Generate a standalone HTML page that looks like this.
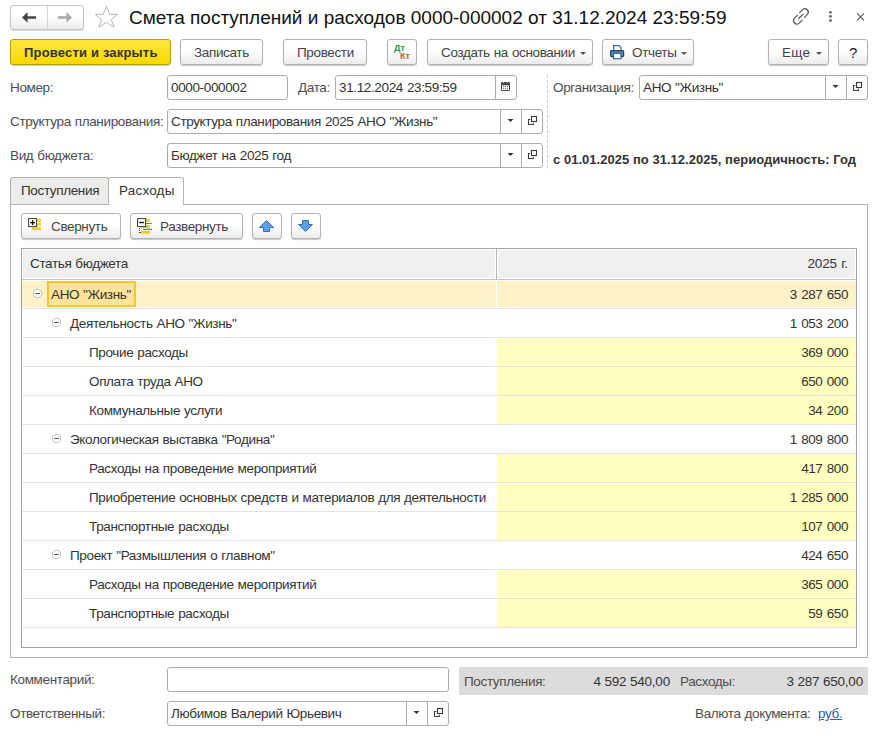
<!DOCTYPE html>
<html><head><meta charset="utf-8">
<style>
*{box-sizing:border-box;margin:0;padding:0}
html,body{width:877px;height:734px;overflow:hidden;background:#fff}
body{position:relative;font-family:"Liberation Sans",sans-serif;font-size:13px;color:#333}
.a{position:absolute}
.t{position:absolute;white-space:nowrap;line-height:15px;font-size:13.5px;letter-spacing:-0.36px;word-spacing:0.54px}
.lbl{color:#4d4d4d}
.btn{position:absolute;height:26px;border:1px solid #b3b3b3;border-radius:3px;background:linear-gradient(#fff 0%,#fff 45%,#ebebeb 100%);box-shadow:0 1px 1px rgba(0,0,0,.22)}
.fld{position:absolute;border:1px solid #ababab;border-radius:3px;background:#fff}
.sep{position:absolute;top:0;bottom:0;width:1px;background:#ababab}
.row{position:absolute;left:22px;width:834px;height:28px}
.rl{position:absolute;left:22px;width:834px;height:1px;background:#e4e4e4}
.yc{position:absolute;left:497px;width:359px;height:28px;background:#ffffc2}
.num{position:absolute;right:29px;white-space:nowrap;line-height:15px;font-size:13.5px;letter-spacing:-0.42px;word-spacing:1px;text-align:right}
</style></head><body>

<!-- top nav -->
<div class="a" style="left:10px;top:5px;width:74px;height:25px;border:1px solid #c4c4c4;border-radius:3px;background:linear-gradient(#fff 40%,#ececec);box-shadow:0 1px 1px rgba(0,0,0,.15)"></div>
<div class="a" style="left:47px;top:6px;width:1px;height:23px;background:#d4d4d4"></div>

<div class="t" style="left:129px;top:7px;font-size:19px;line-height:22px;color:#111;letter-spacing:0;word-spacing:0">Смета поступлений и расходов 0000-000002 от 31.12.2024 23:59:59</div>

<!-- toolbar -->
<div class="a" style="left:10px;top:39px;width:161px;height:26px;border:1px solid #b89e00;border-radius:3px;background:linear-gradient(#ffe840,#f8d800);box-shadow:0 1px 1px rgba(0,0,0,.2)"></div>
<div class="t" style="left:24px;top:45px;font-weight:bold;font-size:13px;letter-spacing:0.18px;word-spacing:0;color:#333">Провести и закрыть</div>

<div class="btn" style="left:180px;top:39px;width:83px"></div>
<div class="t" style="left:194px;top:45px;color:#444">Записать</div>
<div class="btn" style="left:283px;top:39px;width:84px"></div>
<div class="t" style="left:297px;top:45px;color:#444">Провести</div>
<div class="btn" style="left:387px;top:39px;width:30px"></div>
<div class="btn" style="left:427px;top:39px;width:166px"></div>
<div class="t" style="left:441px;top:45px;color:#444">Создать на основании</div>
<div class="btn" style="left:602px;top:39px;width:92px"></div>
<div class="t" style="left:632px;top:45px;color:#444">Отчеты</div>
<div class="btn" style="left:768px;top:39px;width:61px"></div>
<div class="t" style="left:782px;top:45px;color:#444;letter-spacing:0.3px">Еще</div>
<div class="btn" style="left:838px;top:39px;width:30px"></div>

<!-- fields -->
<div class="t lbl" style="left:10px;top:80px">Номер:</div>
<div class="fld" style="left:167px;top:75px;width:121px;height:25px"></div>
<div class="t" style="left:171px;top:80px">0000-000002</div>
<div class="t lbl" style="left:298px;top:80px">Дата:</div>
<div class="fld" style="left:335px;top:75px;width:182px;height:25px"><div class="sep" style="left:159px"></div></div>
<div class="t" style="left:339px;top:80px">31.12.2024 23:59:59</div>

<div class="a" style="left:547px;top:75px;width:1px;height:93px;background:repeating-linear-gradient(#cdcdcd 0 3px,transparent 3px 5px)"></div>
<div class="t lbl" style="left:553px;top:80px">Организация:</div>
<div class="fld" style="left:639px;top:75px;width:229px;height:25px"><div class="sep" style="left:185px"></div><div class="sep" style="left:206px"></div></div>
<div class="t" style="left:643px;top:80px">АНО "Жизнь"</div>

<div class="t lbl" style="left:10px;top:114px">Структура планирования:</div>
<div class="fld" style="left:167px;top:109px;width:376px;height:25px"><div class="sep" style="left:332px"></div><div class="sep" style="left:353px"></div></div>
<div class="t" style="left:171px;top:114px">Структура планирования 2025 АНО "Жизнь"</div>

<div class="t lbl" style="left:10px;top:148px">Вид бюджета:</div>
<div class="fld" style="left:167px;top:143px;width:376px;height:25px"><div class="sep" style="left:332px"></div><div class="sep" style="left:353px"></div></div>
<div class="t" style="left:171px;top:148px">Бюджет на 2025 год</div>
<div class="t" style="left:553px;top:152px;font-weight:bold;font-size:13px;letter-spacing:0.03px;word-spacing:0">с 01.01.2025 по 31.12.2025, периодичность: Год</div>

<!-- tabs -->
<div class="a" style="left:10px;top:204px;width:858px;height:454px;border:1px solid #b2b2b2"></div>
<div class="a" style="left:10px;top:177px;width:99px;height:27px;border:1px solid #b2b2b2;border-bottom:none;border-radius:3px 3px 0 0;background:#ececec"></div>
<div class="a" style="left:108px;top:177px;width:76px;height:28px;border:1px solid #b2b2b2;border-bottom:none;border-radius:3px 3px 0 0;background:#fff"></div>
<div class="t" style="left:21px;top:183px">Поступления</div>
<div class="t" style="left:119px;top:183px;letter-spacing:0.2px">Расходы</div>

<div class="btn" style="left:21px;top:213px;width:100px"></div>
<div class="t" style="left:51px;top:219px;color:#444">Свернуть</div>
<div class="btn" style="left:130px;top:213px;width:113px"></div>
<div class="t" style="left:160px;top:219px;color:#444">Развернуть</div>
<div class="btn" style="left:252px;top:213px;width:30px"></div>
<div class="btn" style="left:291px;top:213px;width:30px"></div>

<!-- table -->
<div class="a" style="left:21px;top:248px;width:836px;height:400px;border:1px solid #a3a3a3"></div>
<div class="a" style="left:23px;top:250px;width:472px;height:28px;background:#f0f0f0"></div>
<div class="a" style="left:498px;top:250px;width:357px;height:28px;background:#f0f0f0"></div>
<div class="a" style="left:496px;top:249px;width:1px;height:31px;background:#b4b4b4"></div>
<div class="a" style="left:22px;top:279px;width:834px;height:1px;background:#c4c4c4"></div>
<div class="t" style="left:30px;top:256px">Статья бюджета</div>
<div class="num" style="top:256px;letter-spacing:-0.1px;word-spacing:0.5px">2025 г.</div>

<!--ROWS-->
<div class="a" style="left:22px;top:281px;width:834px;height:26px;background:#fdf1c7"></div>
<div class="a" style="left:496px;top:281px;width:1px;height:26px;background:#fff"></div>
<div class="a" style="left:47px;top:281px;width:89px;height:26px;border:2px solid #f8c820;background:#fde49a"></div>
<div class="rl" style="top:308px"></div>
<svg class="a" style="left:32px;top:288px" width="11" height="11" viewBox="0 0 11 11"><circle cx="5.5" cy="5.5" r="4.1" fill="#fff" stroke="#b4b4b4" stroke-width="0.9"/><path d="M3.3 5.5h4.4" stroke="#555" stroke-width="1.1"/></svg>
<div class="t" style="left:51px;top:287px">АНО "Жизнь"</div>
<div class="num" style="top:287px">3 287 650</div>
<div class="rl" style="top:337px"></div>
<svg class="a" style="left:51px;top:317px" width="11" height="11" viewBox="0 0 11 11"><circle cx="5.5" cy="5.5" r="4.1" fill="#fff" stroke="#b4b4b4" stroke-width="0.9"/><path d="M3.3 5.5h4.4" stroke="#555" stroke-width="1.1"/></svg>
<div class="t" style="left:70px;top:316px">Деятельность АНО "Жизнь"</div>
<div class="num" style="top:316px">1 053 200</div>
<div class="yc" style="top:338px"></div>
<div class="rl" style="top:366px"></div>
<div class="t" style="left:89px;top:345px">Прочие расходы</div>
<div class="num" style="top:345px">369 000</div>
<div class="yc" style="top:367px"></div>
<div class="rl" style="top:395px"></div>
<div class="t" style="left:89px;top:374px">Оплата труда АНО</div>
<div class="num" style="top:374px">650 000</div>
<div class="yc" style="top:396px"></div>
<div class="rl" style="top:424px"></div>
<div class="t" style="left:89px;top:403px">Коммунальные услуги</div>
<div class="num" style="top:403px">34 200</div>
<div class="rl" style="top:453px"></div>
<svg class="a" style="left:51px;top:433px" width="11" height="11" viewBox="0 0 11 11"><circle cx="5.5" cy="5.5" r="4.1" fill="#fff" stroke="#b4b4b4" stroke-width="0.9"/><path d="M3.3 5.5h4.4" stroke="#555" stroke-width="1.1"/></svg>
<div class="t" style="left:70px;top:432px">Экологическая выставка "Родина"</div>
<div class="num" style="top:432px">1 809 800</div>
<div class="yc" style="top:454px"></div>
<div class="rl" style="top:482px"></div>
<div class="t" style="left:89px;top:461px">Расходы на проведение мероприятий</div>
<div class="num" style="top:461px">417 800</div>
<div class="yc" style="top:483px"></div>
<div class="rl" style="top:511px"></div>
<div class="t" style="left:89px;top:490px">Приобретение основных средств и материалов для деятельности</div>
<div class="num" style="top:490px">1 285 000</div>
<div class="yc" style="top:512px"></div>
<div class="rl" style="top:540px"></div>
<div class="t" style="left:89px;top:519px">Транспортные расходы</div>
<div class="num" style="top:519px">107 000</div>
<div class="rl" style="top:569px"></div>
<svg class="a" style="left:51px;top:549px" width="11" height="11" viewBox="0 0 11 11"><circle cx="5.5" cy="5.5" r="4.1" fill="#fff" stroke="#b4b4b4" stroke-width="0.9"/><path d="M3.3 5.5h4.4" stroke="#555" stroke-width="1.1"/></svg>
<div class="t" style="left:70px;top:548px">Проект "Размышления о главном"</div>
<div class="num" style="top:548px">424 650</div>
<div class="yc" style="top:570px"></div>
<div class="rl" style="top:598px"></div>
<div class="t" style="left:89px;top:577px">Расходы на проведение мероприятий</div>
<div class="num" style="top:577px">365 000</div>
<div class="yc" style="top:599px"></div>
<div class="rl" style="top:627px"></div>
<div class="t" style="left:89px;top:606px">Транспортные расходы</div>
<div class="num" style="top:606px">59 650</div>
<!--/ROWS-->

<!-- bottom -->
<div class="t lbl" style="left:10px;top:672px">Комментарий:</div>
<div class="fld" style="left:167px;top:667px;width:282px;height:25px"></div>
<div class="t lbl" style="left:10px;top:706px">Ответственный:</div>
<div class="fld" style="left:167px;top:701px;width:282px;height:25px"><div class="sep" style="left:238px"></div><div class="sep" style="left:259px"></div></div>
<div class="t" style="left:171px;top:706px">Любимов Валерий Юрьевич</div>
<div class="a" style="left:459px;top:667px;width:409px;height:28px;background:#dcdcdc"></div>
<div class="t lbl" style="left:464px;top:674px">Поступления:</div>
<div class="t" style="left:560px;top:674px;width:110px;text-align:right;letter-spacing:-0.2px;word-spacing:0">4 592 540,00</div>
<div class="t lbl" style="left:680px;top:674px">Расходы:</div>
<div class="t" style="left:753px;top:674px;width:110px;text-align:right;letter-spacing:-0.2px;word-spacing:0">3 287 650,00</div>
<div class="t lbl" style="left:695px;top:706px">Валюта документа:</div>
<div class="t" style="left:818px;top:706px;color:#2d5fa6;text-decoration:underline">руб.</div>
<div class="a" style="left:394px;top:43px;font-size:9px;line-height:10px;font-weight:bold;color:#16a040">Дт</div>
<div class="a" style="left:400px;top:51px;font-size:9px;line-height:10px;font-weight:bold;color:#b8641e">Кт</div>
<div class="t" style="left:849px;top:45px;font-size:15px;letter-spacing:0;color:#222">?</div>
<svg class="a" style="left:0;top:0" width="877" height="734" viewBox="0 0 877 734">
<path d="M22 17.4L27.6 12V16.2H36V18.7H27.6V22.8Z" fill="#474747"/>
<path d="M72 17.4L66.4 12V16.2H58V18.7H66.4V22.8Z" fill="#a9a9a9"/>
<path d="M106.4 6.4L109.7 14.4H117.6L111.3 19.6L114.2 27.2L106.4 22.4L98.6 27.2L101.5 19.6L95.2 14.4H103.1Z" fill="none" stroke="#b8b8b8" stroke-width="1"/>
<g fill="none" stroke="#555" stroke-width="1.2" stroke-linecap="round"><path d="M799.6 12.6L802.6 9.6A3.4 3.4 0 0 1 807.4 14.4L804.5 17.3"/><path d="M802.2 20.1L799.2 23.1A3.4 3.4 0 0 1 794.4 18.3L797.3 15.4"/><path d="M798.7 18.5L803.1 14.1"/></g>
<g fill="#6a6a6a"><circle cx="830.5" cy="12.3" r="1.4"/><circle cx="830.5" cy="16.4" r="1.4"/><circle cx="830.5" cy="20.5" r="1.4"/></g>
<path d="M857 13.3L864 20.3M864 13.3L857 20.3" stroke="#5a5a5a" stroke-width="1.1"/>
<path d="M580 52h6l-3 3z" fill="#555"/><path d="M681 52h6l-3 3z" fill="#555"/><path d="M816 52h6l-3 3z" fill="#555"/>
<g stroke-width="1.2"><path d="M613.6 50.5V45.6H619L621 47.6V50.5" fill="#fff" stroke="#3a6d9a"/><rect x="610.6" y="50.6" width="13" height="6" rx="1" fill="#4f8db8" stroke="#2f3f50"/><rect x="613.6" y="53.3" width="7.4" height="5.4" fill="#fff" stroke="#2f5f90"/></g>
<rect x="501" y="82" width="9" height="9" rx="1" fill="#474747"/><rect x="502" y="85.3" width="7" height="4.7" fill="#fff"/><g fill="#555"><circle cx="503.6" cy="86.6" r=".6"/><circle cx="505.5" cy="86.6" r=".6"/><circle cx="507.4" cy="86.6" r=".6"/><circle cx="503.6" cy="88.6" r=".6"/><circle cx="505.5" cy="88.6" r=".6"/><circle cx="507.4" cy="88.6" r=".6"/></g><rect x="503" y="81" width="1" height="1.6" fill="#fff"/><rect x="507" y="81" width="1" height="1.6" fill="#fff"/>
<path d="M832.5 85h6l-3 3z" fill="#333"/><rect x="856.5" y="82.5" width="5" height="5" fill="none" stroke="#3a3a3a" stroke-width="1.1"/><path d="M855.2 85.5H853.5V90.5H858.3V88.8" fill="none" stroke="#3a3a3a" stroke-width="1.1"/>
<path d="M507.5 119h6l-3 3z" fill="#333"/><rect x="531.5" y="116.5" width="5" height="5" fill="none" stroke="#3a3a3a" stroke-width="1.1"/><path d="M530.2 119.5H528.5V124.5H533.3V122.8" fill="none" stroke="#3a3a3a" stroke-width="1.1"/>
<path d="M507.5 153h6l-3 3z" fill="#333"/><rect x="531.5" y="150.5" width="5" height="5" fill="none" stroke="#3a3a3a" stroke-width="1.1"/><path d="M530.2 153.5H528.5V158.5H533.3V156.8" fill="none" stroke="#3a3a3a" stroke-width="1.1"/>
<path d="M413.5 711h6l-3 3z" fill="#333"/><rect x="437.5" y="708.5" width="5" height="5" fill="none" stroke="#3a3a3a" stroke-width="1.1"/><path d="M436.2 711.5H434.5V716.5H439.3V714.8" fill="none" stroke="#3a3a3a" stroke-width="1.1"/>
<rect x="28.6" y="218.6" width="8" height="8" fill="#fff" stroke="#3a3a3a" stroke-width="1"/><path d="M30.2 222.6H35M32.6 220.2V225" stroke="#111" stroke-width="1.4"/><g fill="#f0d000"><rect x="37.2" y="219" width="3.8" height="2.9"/><rect x="37.2" y="223.1" width="3.8" height="2.7"/><rect x="32" y="227.2" width="9" height="2.7"/></g>
<g fill="#f0d000"><rect x="145.8" y="219" width="4" height="2.9"/><rect x="141.2" y="225" width="8.6" height="2.9"/><rect x="141.2" y="230.9" width="8.6" height="2.9"/></g><path d="M145.8 223.5H152M143 229.4H152" stroke="#3d8ad6" stroke-width="1.1"/><rect x="137.6" y="218.6" width="8" height="8" fill="#fff" stroke="#3a3a3a" stroke-width="1"/><path d="M139.3 222.5H144" stroke="#111" stroke-width="1.4"/><g fill="#444"><rect x="139" y="228" width="1" height="1"/><rect x="139" y="230" width="1" height="1"/><rect x="139" y="232" width="2" height="1"/></g>
<path d="M266.5 220.5L273.5 227.5H269.5V231.5H263.5V227.5H259.5Z" fill="#5aa2e8" stroke="#3c6cb4" stroke-width="1" stroke-linejoin="round"/>
<path d="M302.5 220.5H308.5V224.5H312.5L305.5 231.5L298.5 224.5H302.5Z" fill="#5aa2e8" stroke="#3c6cb4" stroke-width="1" stroke-linejoin="round"/>
</svg>
</body></html>
